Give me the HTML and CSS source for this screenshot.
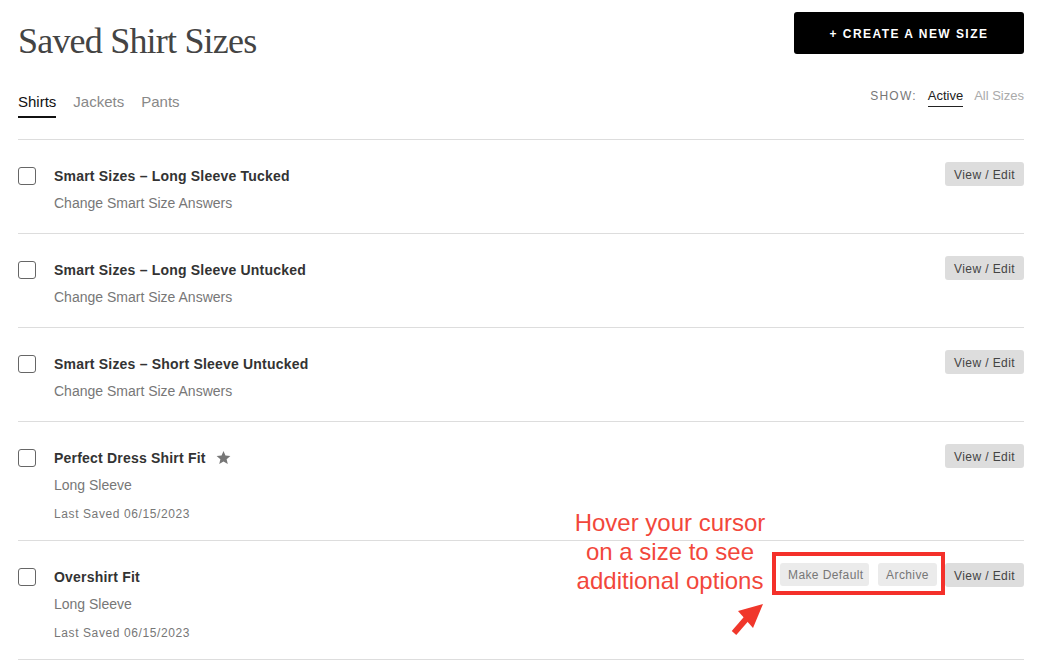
FILE: index.html
```html
<!DOCTYPE html>
<html lang="en">
<head>
<meta charset="utf-8">
<title>Saved Shirt Sizes</title>
<link rel="stylesheet" href="styles.css">
</head>
<body>
<div class="page">
  <header class="header">
    <h1 class="title">Saved Shirt Sizes</h1>
    <button class="create-btn">+ CREATE A NEW SIZE</button>
  </header>

  <div class="toolbar">
    <nav class="tabs">
      <a class="tab tab-active">Shirts</a>
      <a class="tab">Jackets</a>
      <a class="tab">Pants</a>
    </nav>
    <div class="show">
      <span class="show-label">SHOW:</span>
      <a class="show-opt show-active">Active</a>
      <a class="show-opt">All Sizes</a>
    </div>
  </div>

  <ul class="list">
    <li class="row">
      <span class="check"></span>
      <div class="info">
        <div class="name">Smart Sizes – Long Sleeve Tucked</div>
        <div class="sub">Change Smart Size Answers</div>
      </div>
      <div class="actions"><button class="btn btn-edit">View / Edit</button></div>
    </li>
    <li class="row">
      <span class="check"></span>
      <div class="info">
        <div class="name">Smart Sizes – Long Sleeve Untucked</div>
        <div class="sub">Change Smart Size Answers</div>
      </div>
      <div class="actions"><button class="btn btn-edit">View / Edit</button></div>
    </li>
    <li class="row">
      <span class="check"></span>
      <div class="info">
        <div class="name">Smart Sizes – Short Sleeve Untucked</div>
        <div class="sub">Change Smart Size Answers</div>
      </div>
      <div class="actions"><button class="btn btn-edit">View / Edit</button></div>
    </li>
    <li class="row">
      <span class="check"></span>
      <div class="info">
        <div class="name">Perfect Dress Shirt Fit
          <svg class="star" viewBox="0 0 24 24" width="15" height="15"><path d="M12 1.5l3.1 7.3 7.9.7-6 5.2 1.8 7.8L12 18.4l-6.8 4.1L7 14.7 1 9.5l7.9-.7z" fill="#777"/></svg>
        </div>
        <div class="sub">Long Sleeve</div>
        <div class="date">Last Saved 06/15/2023</div>
      </div>
      <div class="actions"><button class="btn btn-edit">View / Edit</button></div>
    </li>
    <li class="row row-hover">
      <span class="check"></span>
      <div class="info">
        <div class="name">Overshirt Fit</div>
        <div class="sub">Long Sleeve</div>
        <div class="date">Last Saved 06/15/2023</div>
      </div>
      <div class="actions">
        <div class="extra">
          <button class="btn btn-light">Make Default</button>
          <button class="btn btn-light">Archive</button>
          <span class="highlight"></span>
        </div>
        <button class="btn btn-edit">View / Edit</button>
      </div>
      <div class="note">Hover your cursor<br>on a size to see<br>additional options</div>
      <svg class="arrow" viewBox="0 0 45 45" width="45" height="45">
        <polygon points="38,5 13,12 28,29" fill="#f0372b"/>
        <line x1="22" y1="19" x2="9" y2="34" stroke="#f0372b" stroke-width="6"/>
      </svg>
    </li>
  </ul>
</div>
</body>
</html>
```

FILE: styles.css
```css
* { box-sizing: border-box; }
body {
  margin: 0;
  background: #fff;
  font-family: "Liberation Sans", Arial, sans-serif;
  color: #333;
}
.page {
  margin: 0 16px 0 18px;
}
.header {
  display: flex;
  justify-content: space-between;
  align-items: flex-start;
  padding-top: 12px;
}
.title {
  margin: 8px 0 0 0;
  font-family: "Liberation Serif", "Times New Roman", serif;
  font-weight: normal;
  font-size: 36px;
  line-height: 42px;
  letter-spacing: -0.8px;
  color: #444;
}
.create-btn {
  width: 230px;
  height: 42px;
  background: #000;
  color: #fff;
  border: none;
  border-radius: 3px;
  font-family: "Liberation Sans", Arial, sans-serif;
  font-weight: bold;
  font-size: 12px;
  letter-spacing: 1.45px;
  padding: 1px 0 0 0;
}
.toolbar {
  display: flex;
  justify-content: space-between;
  align-items: flex-start;
  margin-top: 22px;
  margin-bottom: 21px;
}
.tabs {
  display: flex;
  gap: 17px;
  padding-top: 9px;
}
.tab {
  font-size: 15px;
  line-height: 18px;
  color: #888;
  padding-bottom: 5px;
  border-bottom: 2px solid transparent;
}
.tab-active {
  color: #111;
  border-bottom-color: #111;
}
.show {
  display: flex;
  align-items: flex-start;
  gap: 11px;
  font-size: 13px;
  line-height: 16px;
  padding-top: 4px;
}
.show-label {
  font-size: 12px;
  letter-spacing: 1.2px;
  color: #777;
}
.show-opt {
  color: #aaa;
}
.show-active {
  color: #222;
  padding-bottom: 2px;
  border-bottom: 1px solid #222;
}
.list {
  list-style: none;
  margin: 0;
  padding: 0;
  border-top: 1px solid #ddd;
}
.row {
  position: relative;
  display: flex;
  align-items: flex-start;
  padding: 26px 0 20px 0;
  border-bottom: 1px solid #ddd;
}
.check {
  flex: none;
  width: 18px;
  height: 18px;
  margin-top: 1px;
  margin-right: 18px;
  border: 1px solid #666;
  border-radius: 3px;
  background: #fff;
}
.info {
  flex: 1;
}
.name {
  display: flex;
  align-items: center;
  gap: 10px;
  font-size: 14px;
  line-height: 20px;
  font-weight: bold;
  letter-spacing: 0.2px;
  color: #333;
}
.star {
  display: block;
  margin-top: -1px;
}
.sub {
  margin-top: 7px;
  font-size: 14px;
  line-height: 20px;
  color: #777;
}
.date {
  margin-top: 10px;
  margin-bottom: -3px;
  font-size: 12px;
  line-height: 18px;
  letter-spacing: 0.6px;
  color: #777;
}
.actions {
  display: flex;
  align-items: flex-start;
  gap: 8px;
  margin-top: -4px;
}
.extra {
  position: relative;
  display: flex;
  gap: 9px;
}
.btn {
  height: 24px;
  border: none;
  border-radius: 3px;
  font-family: "Liberation Sans", Arial, sans-serif;
  font-size: 12px;
  letter-spacing: 0.4px;
  padding: 1px 8px 0 8px;
  white-space: nowrap;
}
.btn-edit {
  width: 79px;
  background: #ddd;
  color: #444;
}
.btn-light {
  height: 23px;
  background: #ebebeb;
  color: #777;
}
.extra .btn-light:first-child { width: 89px; }
.extra .btn-light:nth-child(2) { width: 59px; }
.highlight {
  position: absolute;
  left: -8px;
  right: -8px;
  top: -11px;
  bottom: -9px;
  border: 4px solid #f4302a;
}
.note {
  position: absolute;
  left: 537px;
  top: -33px;
  width: 230px;
  text-align: center;
  font-family: "Liberation Sans", Arial, sans-serif;
  font-size: 24px;
  line-height: 29px;
  color: #f2473b;
}
.arrow {
  position: absolute;
  left: 707px;
  top: 58px;
}
```
